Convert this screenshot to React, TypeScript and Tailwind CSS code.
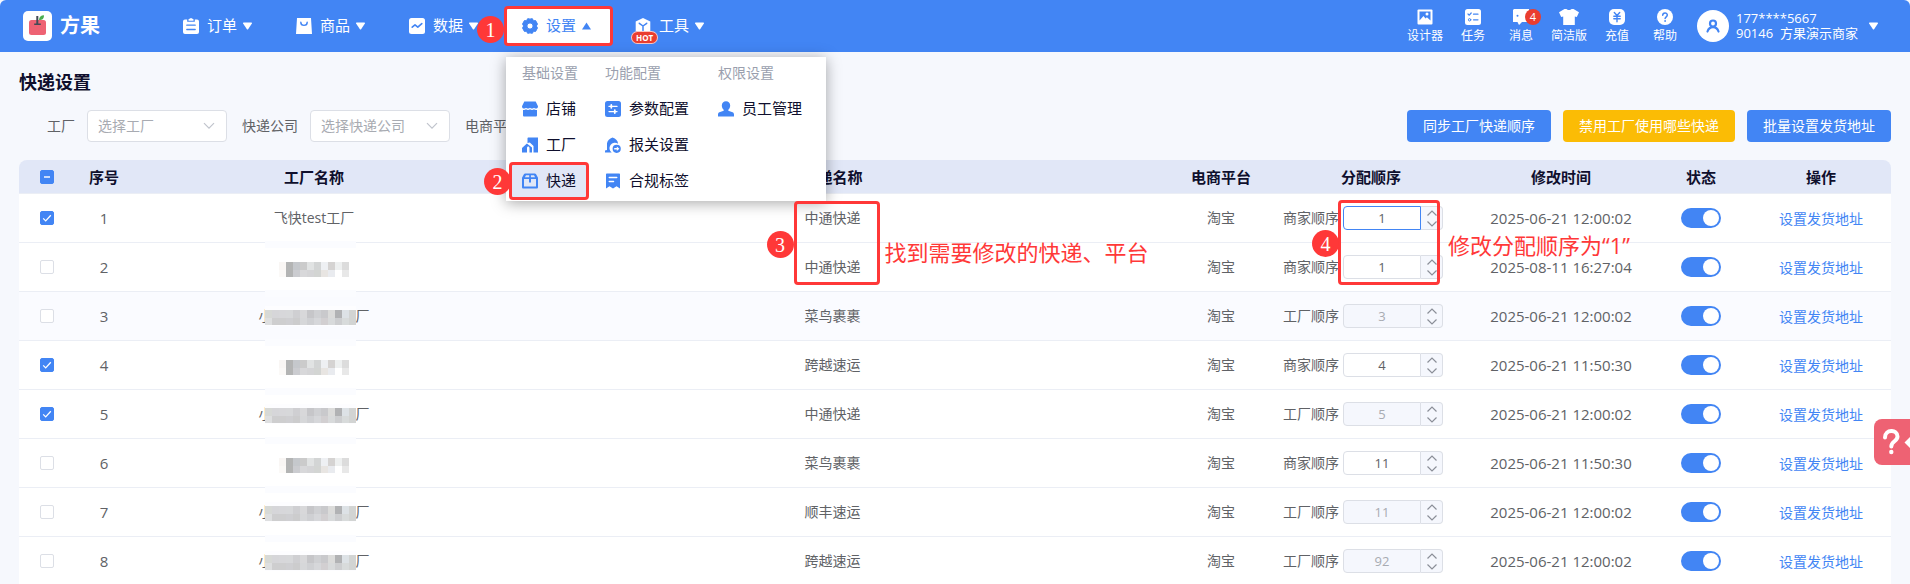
import { useEffect, useRef, useState } from 'react';
import type { ReactNode } from 'react';

type Row = {
  id: number;
  factory: 'text' | 'short' | 'long';
  express: string;
  owner: string;
  order: number;
  time: string;
  checked: boolean;
};

const rows: Row[] = [
  { id: 1, factory: 'text', express: '中通快递', owner: '商家顺序', order: 1, time: '2025-06-21 12:00:02', checked: true },
  { id: 2, factory: 'short', express: '中通快递', owner: '商家顺序', order: 1, time: '2025-08-11 16:27:04', checked: false },
  { id: 3, factory: 'long', express: '菜鸟裹裹', owner: '工厂顺序', order: 3, time: '2025-06-21 12:00:02', checked: false },
  { id: 4, factory: 'short', express: '跨越速运', owner: '商家顺序', order: 4, time: '2025-06-21 11:50:30', checked: true },
  { id: 5, factory: 'long', express: '中通快递', owner: '工厂顺序', order: 5, time: '2025-06-21 12:00:02', checked: true },
  { id: 6, factory: 'short', express: '菜鸟裹裹', owner: '商家顺序', order: 11, time: '2025-06-21 11:50:30', checked: false },
  { id: 7, factory: 'long', express: '顺丰速运', owner: '工厂顺序', order: 11, time: '2025-06-21 12:00:02', checked: false },
  { id: 8, factory: 'long', express: '跨越速运', owner: '工厂顺序', order: 92, time: '2025-06-21 12:00:02', checked: false },
];

const shortMosaic = [
  ['#f9f6f4', '#b3b4b4', '#c5c8cc', '#cbcbcb', '#e1e3e3', '#d3d5d5', '#eef0f3', '#d5d3d2', '#eef0f0', '#dcdcdc'],
  ['#fbf9f7', '#b3b4b4', '#cbccd0', '#d8d8da', '#d5d5d7', '#d3d5d3', '#e8e5e2', '#e9ebef', '#ffffff', '#e8e8e8'],
];

const longMosaic = [
  ['#d7d9d6', '#d6d6d9', '#d7d7da', '#d7d8da', '#cfcfd2', '#d8d8da', '#c6c6c9', '#cfd0d3', '#c9c9cc', '#dbdbda', '#b1b2b4', '#dde2e6', '#d2d4d3'],
  ['#dedfe0', '#cececf', '#cececf', '#cfcfd2', '#cccccd', '#d6d7d9', '#cfd0d3', '#d6d7da', '#d2cfd1', '#d8dadb', '#cdced0', '#d8dbdb', '#d2d4d3'],
];

function Mosaic({ cells }: { cells: string[][] }) {
  const width = cells[0].length * 7;
  return (
    <svg width={width} height="15" viewBox={`0 0 ${width} 15`} className="block shrink-0" shapeRendering="crispEdges" aria-hidden="true">
      {cells.map((line, y) =>
        line.map((color, x) => (
          <rect key={`${x}-${y}`} x={x * 7} y={y * 8} width="7" height={y === 0 ? 8 : 7} fill={color} />
        )),
      )}
    </svg>
  );
}

function Triangle({ up = false }: { up?: boolean }) {
  return (
    <svg width="9" height="8" viewBox="0 0 9 8" fill="currentColor" className="shrink-0" aria-hidden="true">
      {up ? <path d="M4.5 0.5 9 7.5H0z" /> : <path d="M0.6 0.5h7.8c.5 0 .7.5.5.9L5.1 7.2c-.3.4-.9.4-1.2 0L.1 1.4C-.1 1 .1.5.6.5z" />}
    </svg>
  );
}

function Svg({ children, size = 16 }: { children: ReactNode; size?: number }) {
  return (
    <svg width={size} height={size} viewBox="0 0 16 16" fill="currentColor" className="shrink-0" aria-hidden="true">
      {children}
    </svg>
  );
}

const line = { fill: 'none', strokeLinecap: 'round', strokeLinejoin: 'round' } as const;

const icons = {
  order: (
    <Svg>
      <path d="M2 1.5h2.2v2.300h7.600V1.500H14a2 2 0 0 1 2 2V14a2 2 0 0 1-2 2H2a2 2 0 0 1-2-2V3.500a2 2 0 0 1 2-2z" />
      <path d="M5.500 1.200 8 0l2.500 1.200v1.500h-5z" />
      <path {...line} d="M3.800 7.200h8.400M3.800 11.500h8.400" stroke="#4285f4" strokeWidth="1.300" />
    </Svg>
  ),
  goods: (
    <Svg>
      <path d="M1 0h14l1 16H0z" />
      <path {...line} d="M4.800 4.200c0 4.200 6.400 4.200 6.400 0" stroke="#4285f4" strokeWidth="1.400" />
    </Svg>
  ),
  data: (
    <Svg>
      <rect width="16" height="16" rx="2.500" />
      <path {...line} d="m3.200 9.200 2.800-2.400 2.800 2.400 4-3.600" stroke="#4285f4" strokeWidth="1.600" />
    </Svg>
  ),
  gear: (
    <Svg>
      <path
        stroke="currentColor"
        strokeLinejoin="round"
        fillRule="evenodd"
        d="M5.500.8h2l.5.700.5-.7h2l.9 2 2.200-.2 1.900 3.500L14.300 8l1.200 1.900-1.900 3.500-2.200-.2-.9 2h-2l-.5-.7-.5.700h-2l-.9-2-2.200.2L.5 9.900 1.700 8 .5 6.100l1.900-3.500 2.200.2zM8 4.900a3.100 3.100 0 1 0 0 6.200 3.100 3.100 0 0 0 0-6.200z"
      />
    </Svg>
  ),
  tool: (
    <Svg>
      <path d="M8 0l7.300 3.600V13L8 16 .7 13V3.600z" />
      <path {...line} d="M4.300 5.300 8 8l3.700-2.700M8 8v4.500" stroke="#4285f4" strokeWidth="1.500" />
    </Svg>
  ),
  shop: (
    <Svg>
      <path d="M2.300.5h11.400L16 5.200c0 1.600-.8 2.400-2 2.400s-1.700-.9-2-.9-.9.900-2 .9-1.700-.9-2-.9-.9.900-2 .9-1.700-.9-2-.9-.8.900-2 .9-2-.8-2-2.400z" />
      <path d="M1 9c1.500.3 2.500-.2 3-.7 1.100 1 2.900 1 4 0 1.100 1 2.900 1 4 0 .5.5 1.500 1 3 .7v5.200c0 .8-.5 1.300-1.300 1.300H2.300c-.8 0-1.300-.5-1.300-1.300z" />
    </Svg>
  ),
  factory: (
    <Svg>
      <path d="M5.500 1.500c0-.6.400-1 1-1H16v15h-4.500V9L7.800 5.600 5.500 6z" />
      <path d="M4.900 6.500 10 10.400v5.100H7.500V11c0-1-.6-1.600-1.300-1.600S5 10 5 11v4.500H0v-4.600z" />
    </Svg>
  ),
  express: (
    <Svg>
      <path
        fillRule="evenodd"
        d="M3.200.5h9.600c.6 0 1 .3 1.300.8L16 4.800v9.400c0 .8-.6 1.300-1.300 1.300H1.300C.6 15.500 0 15 0 14.200V4.800l1.900-3.500c.3-.5.7-.8 1.300-.8zM4 2.300 2.900 4.300h4.300v-2zm4.900 0v2h4.200L12 2.300zM2 6v7.600h12V6H9v3.500H7V6z"
      />
    </Svg>
  ),
  params: (
    <Svg>
      <rect width="16" height="16" rx="2.500" />
      <path {...line} d="M4 5.400h8M4 10.600h8" stroke="#fff" strokeWidth="1.300" />
      <path {...line} d="M6.300 4v2.800M9.800 9.200v2.800" stroke="#fff" strokeWidth="1.800" />
    </Svg>
  ),
  customs: (
    <Svg>
      <path d="M7.500.5c3.500 1.300 5.300 3.100 5.600 6.200a5 5 0 0 0-6.400 8.800H0v-2l2-.5V6.300C2.600 3.400 4.500 1.600 7.500.500z" />
      <path
        fillRule="evenodd"
        d="M11.700 7.700a4.100 4.100 0 1 1 0 8.200 4.100 4.100 0 0 1 0-8.200zm.1 1.800v1.400H9.200v1.700h2.600V14l2.600-2.300z"
      />
    </Svg>
  ),
  label: (
    <Svg>
      <path d="M2 .5h12c.6 0 1 .4 1 1v14l-3.500-2.200L8 15.500l-3.500-2.200L1 15.500v-14c0-.6.400-1 1-1z" />
      <path {...line} d="M4.300 4.500h7.400M4.300 8.500h4.200" stroke="#fff" strokeWidth="1.500" />
    </Svg>
  ),
  staff: (
    <Svg>
      <path d="M8 .3c2.500 0 4.200 1.800 4.200 4.200 0 1.700-.8 3.300-1.900 4.200v1l4.300 1.600c.9.400 1.400 1.200 1.400 2.200v2H0v-2c0-1 .5-1.800 1.400-2.200l4.300-1.600v-1C4.600 7.800 3.800 6.200 3.800 4.500 3.800 2.100 5.500.3 8 .3z" />
    </Svg>
  ),
  designer: (
    <Svg>
      <rect x="0.500" y="0.500" width="15" height="15" rx="1" />
      <path d="M2.500 2.500h11v9l-3.600-3.300-1.400 1.200-2-2.400-4 4.500z" fill="#4285f4" />
      <circle cx="10" cy="5" r="1.500" fill="#fff" />
    </Svg>
  ),
  task: (
    <Svg>
      <rect width="16" height="16" rx="2.500" />
      <path {...line} d="m3 5 1.300 1.200L6.200 4M8.500 5.200H13M8.500 10.800H13" stroke="#4285f4" strokeWidth="1.200" />
      <circle cx="4.600" cy="10.800" r="1.200" {...line} stroke="#4285f4" strokeWidth="1" />
    </Svg>
  ),
  message: (
    <Svg>
      <path d="M1 0h15v13H9l-3 3-1.500-3H0V1z" />
      <circle cx="4.500" cy="6.800" r="1" fill="#4285f4" />
    </Svg>
  ),
  simple: (
    <svg width="20" height="16" viewBox="0 0 20 16" fill="currentColor" aria-hidden="true">
      <path d="M5.500 0h2c1 1.300 4 1.300 5 0h2L20 3.200 17.800 8l-2-.6V16H4.200V7.400l-2 .6L0 3.200z" />
    </svg>
  ),
  recharge: (
    <Svg>
      <rect width="16" height="16" rx="5" />
      <path {...line} d="M5.300 3.500 8 6.500l2.700-3M4.800 7.200h6.400M4.800 9.700h6.400M8 6.700v6" stroke="#4285f4" strokeWidth="1.400" />
    </Svg>
  ),
  help: (
    <Svg>
      <circle cx="8" cy="8" r="8" />
      <path {...line} d="M5.700 6.200c.1-3 4.600-3 4.600-.1 0 1.700-2.200 1.700-2.200 3.500" stroke="#4285f4" strokeWidth="1.500" />
      <circle cx="8.100" cy="12" r="0.900" fill="#4285f4" />
    </Svg>
  ),
};

const navItems = [
  { label: '订单', icon: icons.order },
  { label: '商品', icon: icons.goods },
  { label: '数据', icon: icons.data },
];

const menuGroups = [
  {
    title: '基础设置',
    items: [
      { label: '店铺', icon: icons.shop },
      { label: '工厂', icon: icons.factory },
      { label: '快递', icon: icons.express },
    ],
  },
  {
    title: '功能配置',
    items: [
      { label: '参数配置', icon: icons.params },
      { label: '报关设置', icon: icons.customs },
      { label: '合规标签', icon: icons.label },
    ],
  },
  { title: '权限设置', items: [{ label: '员工管理', icon: icons.staff }] },
];

const tools = [
  { label: '设计器', icon: icons.designer },
  { label: '任务', icon: icons.task },
  { label: '消息', icon: icons.message, badge: 4 },
  { label: '简洁版', icon: icons.simple },
  { label: '充值', icon: icons.recharge },
  { label: '帮助', icon: icons.help },
];

function Marker({ n, className }: { n: number; className: string }) {
  return (
    <span
      className={`absolute z-30 flex size-[27px] items-center justify-center rounded-full bg-[#ff3838] font-['Liberation_Serif',serif] text-xl leading-none font-normal text-white ${className}`}
    >
      {n}
    </span>
  );
}

function Frame({ className }: { className: string }) {
  return <span className={`pointer-events-none absolute z-20 rounded-sm border-3 border-[#ff3838] ${className}`} />;
}

function SettingsMenu() {
  return (
    <div className="absolute top-[57px] -left-4 z-10 flex gap-[5px] bg-white pt-1 pr-3 pb-[2px] pl-1 shadow-[0_2px_14px_rgba(0,0,0,0.35)]">
      {menuGroups.map((group) => (
        <div key={group.title}>
          <p className="w-0 px-3 pt-[2px] pb-2 text-sm leading-5 whitespace-nowrap text-[#9a9fae]">{group.title}</p>
          <ul>
            {group.items.map((item) => (
              <li key={item.label} className="relative">
                <a
                  href="#"
                  className={`flex h-9 items-center gap-2 px-3 text-[15px] whitespace-nowrap text-[#0f0f2d] ${item.label === '快递' ? 'bg-[#e1e7f7]' : ''}`}
                >
                  <span className="text-[#4285f4]">{item.icon}</span>
                  {item.label}
                </a>
                {item.label === '快递' && (
                  <>
                    <Frame className="-inset-px" />
                    <Marker n={2} className="top-[5px] -left-[26px]" />
                  </>
                )}
              </li>
            ))}
          </ul>
        </div>
      ))}
    </div>
  );
}

function Header() {
  return (
    <header className="flex h-[52px] items-center rounded-t-md bg-[#4285f4] pr-8 pl-[23px] text-white">
      <a href="#" className="flex w-40 items-center gap-2 text-xl font-bold">
        <svg width="29" height="30" viewBox="0 0 29 30" aria-hidden="true">
          <rect width="29" height="30" rx="5" fill="#fff" />
          <rect x="6" y="9" width="17" height="15" rx="2.500" fill="#ee6273" />
          <path d="M13.300 5h2v7.500h2.500V14h-6.600v-1.500h2.100z" fill="#444a56" />
          <path d="M16 9c0-3 2-4.800 5-4.800C21 7.500 19.500 9 16 9z" fill="#4cae4f" />
        </svg>
        方果
      </a>
      <nav className="flex h-full gap-11 text-[15px]">
        {navItems.map((item) => (
          <button key={item.label} type="button" className="flex items-center gap-2">
            {item.icon}
            <span className="flex items-center gap-[6px]">
              {item.label}
              <Triangle />
            </span>
          </button>
        ))}
        <div className="relative flex">
          <span className="absolute top-2 -right-5 -left-4 h-9 bg-white" />
          <button type="button" aria-expanded="true" className="relative flex items-center gap-2 text-[#4285f4]">
            {icons.gear}
            <span className="flex items-center gap-[6px]">
              设置
              <Triangle up />
            </span>
          </button>
          <Frame className="top-[6px] -right-[22px] -left-[18px] h-10" />
          <Marker n={1} className="top-4 -left-[45px]" />
          <SettingsMenu />
        </div>
        <button type="button" className="flex items-center gap-2">
          <span className="relative">
            {icons.tool}
            <span className="absolute top-[13px] -left-1 rounded-full border border-white/70 bg-[#ea3d2f] px-1 text-[8px] leading-[11px] font-bold">
              HOT
            </span>
          </span>
          <span className="flex items-center gap-[6px]">
            工具
            <Triangle />
          </span>
        </button>
      </nav>
      <div className="ml-auto flex items-center">
        {tools.map((tool) => (
          <a key={tool.label} href="#" className="relative flex w-12 flex-col items-center gap-[3px] text-xs leading-4 whitespace-nowrap">
            {tool.icon}
            {tool.badge && (
              <span className="absolute top-0 right-1 flex size-4 items-center justify-center rounded-full bg-[#ea3d2f] text-[11px]">
                {tool.badge}
              </span>
            )}
            {tool.label}
          </a>
        ))}
      </div>
      <button type="button" className="ml-2 flex items-center gap-[7px] text-left text-[13px] leading-[15px]">
        <span className="flex size-8 items-center justify-center rounded-full bg-white text-[#4285f4]">
          <Svg>
            <circle {...line} cx="8" cy="5.500" r="3" stroke="currentColor" strokeWidth="2.200" />
            <path {...line} d="M2.500 13.500c1-3 3-4.300 5.500-4.300s4.500 1.300 5.500 4.300" stroke="currentColor" strokeWidth="2.200" />
          </Svg>
        </span>
        <span className="min-w-[126px]">
          177****5667
          <br />
          90146&nbsp; 方果演示商家
        </span>
        <Triangle />
      </button>
    </header>
  );
}

function Filter({ id, label }: { id: string; label: string }) {
  return (
    <div className="flex items-center gap-3">
      <label htmlFor={id} className="text-[#606266]">
        {label}
      </label>
      <div className="relative">
        <select id={id} className="h-8 w-[140px] appearance-none rounded border border-[#dcdfe6] bg-white px-[10px] text-[#a8abb2]">
          <option>选择{label}</option>
        </select>
        <svg width="12" height="8" viewBox="0 0 12 8" className="pointer-events-none absolute top-3 right-3" aria-hidden="true">
          <path d="M1 1.200 6 6.200l5-5" fill="none" stroke="#c0c4cc" strokeWidth="1.200" />
        </svg>
      </div>
    </div>
  );
}

function Checkbox({ label, checked = false, mixed = false }: { label: string; checked?: boolean; mixed?: boolean }) {
  const ref = useRef<HTMLInputElement>(null);

  useEffect(() => {
    if (ref.current) ref.current.indeterminate = mixed;
  }, [mixed]);

  return (
    <span className="relative mx-auto block size-[14px]">
      <input
        ref={ref}
        type="checkbox"
        aria-label={label}
        defaultChecked={checked}
        className="peer block size-[14px] appearance-none rounded-[2px] border border-[#dcdfe6] bg-white checked:border-[#4285f4] checked:bg-[#4285f4] indeterminate:border-[#4285f4] indeterminate:bg-[#4285f4]"
      />
      <svg width="14" height="14" viewBox="0 0 14 14" className="pointer-events-none absolute inset-0" aria-hidden="true">
        {mixed ? (
          <path d="M4 7h6" stroke="#c9dbfc" strokeWidth="2" />
        ) : (
          <path d="m3.200 7.400 2.500 2.500 5.100-5.600" fill="none" stroke="#fff" strokeWidth="1.300" />
        )}
      </svg>
    </span>
  );
}

function OrderInput({ row }: { row: Row }) {
  const [value, setValue] = useState(row.order);
  const disabled = row.owner === '工厂顺序';
  const active = row.id === 1;

  return (
    <div className="flex items-center gap-1">
      <label htmlFor={`order-${row.id}`}>{row.owner}</label>
      <div className="flex h-6 w-[100px]">
        <input
          id={`order-${row.id}`}
          value={value}
          disabled={disabled}
          onChange={(e) => setValue(Number(e.target.value) || 0)}
          className={`w-[78px] rounded-l border text-center text-[13px] disabled:bg-[#f5f7fd] disabled:text-[#a8abb2] ${active ? 'border-[#4285f4]' : 'border-[#dcdfe6]'}`}
        />
        <div className="flex w-[22px] flex-col rounded-r border border-l-0 border-[#dcdfe6] bg-[#f5f7fd] text-[#8b8f98]">
          <button type="button" aria-label="增加" disabled={disabled} onClick={() => setValue(value + 1)} className="flex h-[11px] items-center justify-center">
            <svg width="10" height="6" viewBox="0 0 10 6" aria-hidden="true">
              <path d="M.5 5.500 5 1l4.500 4.500" fill="none" stroke="currentColor" strokeWidth="1.200" />
            </svg>
          </button>
          <button type="button" aria-label="减少" disabled={disabled} onClick={() => setValue(value - 1)} className="flex h-[11px] items-center justify-center">
            <svg width="10" height="6" viewBox="0 0 10 6" aria-hidden="true">
              <path d="M.5.500 5 5 9.500.500" fill="none" stroke="currentColor" strokeWidth="1.200" />
            </svg>
          </button>
        </div>
      </div>
    </div>
  );
}

function FactoryName({ kind }: { kind: Row['factory'] }) {
  if (kind === 'text') return <>飞快test工厂</>;

  if (kind === 'short') {
    return (
      <span className="flex justify-center pt-1">
        <Mosaic cells={shortMosaic} />
      </span>
    );
  }

  return (
    <span className="flex items-center justify-center">
      <span>小</span>
      <span className="relative -ml-2 bg-[#fdfdff] pt-1 pb-px">
        <Mosaic cells={longMosaic} />
      </span>
      <span>厂</span>
    </span>
  );
}

export default function App() {
  return (
    <div className="relative min-h-screen overflow-hidden bg-[#f6f8fd] font-['Open_Sans','Noto_Sans_CJK_SC',sans-serif] text-sm text-[#606266]">
      <Header />

      <main className="px-[19px]">
        <h1 className="pt-4 text-lg leading-7 font-bold text-[#0f0f2d]">快递设置</h1>

        <div className="mt-[14px] flex items-center justify-between">
          <div className="flex gap-[15px] pl-7">
            <Filter id="factory" label="工厂" />
            <Filter id="company" label="快递公司" />
            <Filter id="platform" label="电商平台" />
          </div>
          <div className="flex gap-3 text-white">
            <button type="button" className="h-8 rounded bg-[#4285f4] px-4">同步工厂快递顺序</button>
            <button type="button" className="h-8 rounded bg-[#fbbc05] px-4">禁用工厂使用哪些快递</button>
            <button type="button" className="h-8 rounded bg-[#4285f4] px-4">批量设置发货地址</button>
          </div>
        </div>

        <table className="mt-[18px] w-full table-fixed border-separate border-spacing-0 text-center leading-5">
          <thead className="text-[15px] text-[#0f0f2d]">
            <tr className="h-[34px] [&>th]:border-b [&>th]:border-[#ebeef5] [&>th]:bg-[#e1e7f7]">
              <th className="w-[55px] rounded-tl-lg">
                <Checkbox label="全选" mixed />
              </th>
              <th className="w-[60px]">序号</th>
              <th className="w-[360px]">工厂名称</th>
              <th>快递名称</th>
              <th className="w-[100px]">电商平台</th>
              <th className="w-[200px]">分配顺序</th>
              <th className="w-[180px]">修改时间</th>
              <th className="w-[100px]">状态</th>
              <th className="w-[140px] rounded-tr-lg">操作</th>
            </tr>
          </thead>
          <tbody>
            {rows.map((row) => (
              <tr
                key={row.id}
                className={`h-[49px] [&>td]:border-b [&>td]:border-[#ebeef5] ${row.id === 3 ? 'bg-[#fafbff]' : 'bg-white'}`}
              >
                <td>
                  <Checkbox label={`选择第${row.id}行`} checked={row.checked} />
                </td>
                <td className="text-[15px]">{row.id}</td>
                <td className="relative">
                  <FactoryName kind={row.factory} />
                  <span className="absolute -bottom-[6px] left-[131px] z-10 h-[7px] w-[91px] bg-[#fbfcff]" />
                </td>
                <td className="relative">
                  {row.express}
                  {row.id === 1 && (
                    <>
                      <Frame className="top-[7px] left-1/2 h-[84px] w-[86px] -translate-x-[39px]" />
                      <Marker n={3} className="top-[37px] left-1/2 -translate-x-[66px]" />
                      <span className="absolute top-[46px] left-1/2 z-10 ml-[52px] text-[22px] leading-6 whitespace-nowrap text-[#ff3838]">
                        找到需要修改的快递、平台
                      </span>
                    </>
                  )}
                </td>
                <td>淘宝</td>
                <td className="relative px-3">
                  <OrderInput row={row} />
                  {row.id === 1 && (
                    <>
                      <Frame className="top-[6px] left-[67px] h-[85px] w-[102px]" />
                      <Marker n={4} className="top-9 left-[41px]" />
                      <span className="absolute top-[39px] left-[177px] z-10 text-[22px] leading-6 whitespace-nowrap text-[#ff3838]">
                        修改分配顺序为“1”
                      </span>
                    </>
                  )}
                </td>
                <td className="text-[15px] whitespace-nowrap">{row.time}</td>
                <td>
                  <input
                    type="checkbox"
                    role="switch"
                    aria-label={`状态${row.id}`}
                    defaultChecked
                    className="mx-auto block h-5 w-10 appearance-none rounded-full bg-gray-300 p-[2px] before:block before:size-4 before:rounded-full before:bg-white checked:bg-[#4285f4] checked:before:ml-5"
                  />
                </td>
                <td className="pt-[2px]">
                  <a href="#" className="text-[#4285f4]">
                    设置发货地址
                  </a>
                </td>
              </tr>
            ))}
          </tbody>
        </table>
      </main>

      <button type="button" aria-label="帮助" className="fixed top-[419px] right-0 z-20 flex h-[46px] w-9 items-center rounded-l-lg bg-[#ee6273] pl-2">
        <svg width="28" height="26" viewBox="0 0 28 26" className="shrink-0" aria-hidden="true">
          <path {...line} d="M3 8.500C3 0 15.500 0 15.500 7.500 15.500 12.500 9.300 12 9.300 17.500" stroke="#fff" strokeWidth="4" />
          <circle cx="9.300" cy="23" r="2.200" fill="#fff" />
          <path d="M28 8v11l-5.500-5.500z" fill="#fff" />
        </svg>
      </button>
    </div>
  );
}
